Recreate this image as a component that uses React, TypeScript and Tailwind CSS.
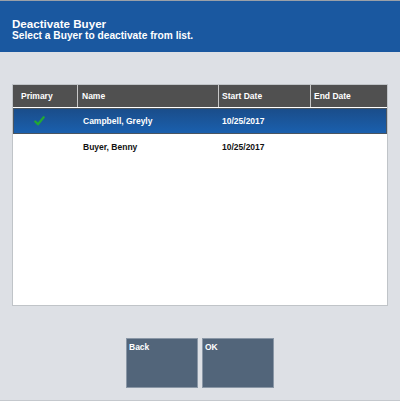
import React from "react";

export default function App() {
  const font = { fontFamily: '"Liberation Sans", Arial, Helvetica, sans-serif' };
  return (
    <div
      className="w-[400px] h-[401px] flex flex-col bg-[#dde0e5] border-t border-[#9aa0a8] border-b border-b-[#c4c8cd] overflow-hidden"
      style={font}
    >
      <div className="h-[51px] shrink-0 bg-[#1a58a0] flex flex-col justify-start pl-[12px] pt-[16px]">
        <div className="text-white font-bold text-[11.6px] leading-[13px]">Deactivate Buyer</div>
        <div className="text-white font-bold text-[10.2px] leading-[12px]">Select a Buyer to deactivate from list.</div>
      </div>
      <div className="flex-1 flex flex-col px-[12px] pt-[32px]">
        <div className="h-[222px] bg-white border border-[#c0c4c8] flex flex-col">
          <div className="h-[22px] bg-[#505050] flex text-white font-bold text-[8.5px] items-stretch">
            <div className="w-[65px] flex items-center pl-[8px] border-r border-[#c8c8c8]">Primary</div>
            <div className="w-[141px] flex items-center pl-[4px] border-r border-[#c8c8c8]">Name</div>
            <div className="w-[92px] flex items-center pl-[3px] border-r border-[#c8c8c8]">Start Date</div>
            <div className="flex-1 flex items-center pl-[3px]">End Date</div>
          </div>
          <div className="h-[26px] mt-[1px] flex items-center text-white font-bold text-[8.5px] bg-gradient-to-b from-[#1a4d8a] to-[#1a60ae] border border-[#4a5560]">
            <div className="w-[64px] flex justify-start pl-[20px]">
              <svg width="11" height="10" viewBox="0 0 11 10">
                <path d="M1.3 5.5 L4 8.3 L9.7 1.3" fill="none" stroke="#22a833" strokeWidth="2.3" strokeLinecap="round" strokeLinejoin="round" />
              </svg>
            </div>
            <div className="w-[141px] pl-[5px]">Campbell, Greyly</div>
            <div className="w-[92px] pl-[3px]">10/25/2017</div>
            <div className="flex-1"></div>
          </div>
          <div className="h-[26px] flex items-center text-[#111] font-bold text-[8.5px]">
            <div className="w-[65px]"></div>
            <div className="w-[141px] pl-[5px]">Buyer, Benny</div>
            <div className="w-[92px] pl-[3px]">10/25/2017</div>
            <div className="flex-1"></div>
          </div>
        </div>
        <div className="flex justify-center gap-[4px] mt-[32px]">
          <div className="w-[72px] h-[50px] bg-[#52657a] border border-[#8a97a6] text-white font-bold text-[8.5px] pl-[2px] pt-[2px]">Back</div>
          <div className="w-[72px] h-[50px] bg-[#52657a] border border-[#8a97a6] text-white font-bold text-[8.5px] pl-[2px] pt-[2px]">OK</div>
        </div>
      </div>
    </div>
  );
}
